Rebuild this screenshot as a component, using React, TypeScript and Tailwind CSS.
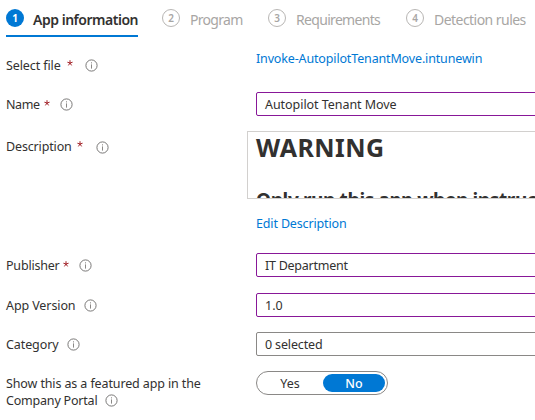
import type { ReactNode } from "react";

function InfoIcon({ className = "" }: { className?: string }) {
  return (
    <svg viewBox="0 0 13 13" className={`h-[13px] w-[13px] shrink-0 ${className}`} fill="none">
      <circle cx="6.5" cy="6.5" r="5.6" stroke="#6b6a69" strokeWidth="0.9" />
      <rect x="6" y="5.4" width="1" height="4.2" fill="#8a8886" />
      <rect x="6" y="3.3" width="1" height="1.1" fill="#8a8886" />
    </svg>
  );
}

function Star({ raised = false }: { raised?: boolean }) {
  return (
    <svg viewBox="0 0 6 6" className={`h-[6px] w-[6px] shrink-0 ${raised ? "mb-[6px]" : "mb-[3px]"}`} stroke="#a4262c" strokeWidth="1">
      <path d="M3 0.2V3M3 3L0.4 2.2M3 3L5.6 2.2M3 3L1.4 5.4M3 3L4.6 5.4" />
    </svg>
  );
}

function Tab({ n, label, className, text }: { n: number; label: string; className: string; text: string }) {
  return (
    <div className={`flex h-[37px] shrink-0 items-start pt-[9px] ${className}`}>
      <span className="flex h-[18px] w-[18px] shrink-0 items-center justify-center rounded-full border border-[#b8b6b4] text-[10px] leading-none font-semibold text-[#a8a6a4]">
        {n}
      </span>
      <span className={`ml-[10px] text-[14px] leading-[22px] whitespace-nowrap text-[#a8a6a4] ${text}`}>{label}</span>
    </div>
  );
}

function Row({ className, label, children }: { className: string; label: ReactNode; children: ReactNode }) {
  return (
    <div className={`flex items-start ${className}`}>
      <div className="flex h-[24px] w-[250px] shrink-0 items-center pt-px">{label}</div>
      {children}
    </div>
  );
}

function Field({ children, className }: { children: ReactNode; className: string }) {
  return (
    <div className={`flex h-[24px] w-[300px] shrink-0 items-center rounded-[2px] border pt-px pl-[8px] ${className}`}>
      {children}
    </div>
  );
}

export default function App() {
  return (
    <div className="h-[420px] w-[535px] overflow-hidden bg-white pl-[6px] font-['Noto_Sans','Open_Sans',sans-serif] text-[12.5px] leading-[18px] whitespace-nowrap text-[#323130]">
      <div className="flex h-[53px]">
        <div className="flex h-[37px] w-[132px] shrink-0 items-start border-b-2 border-[#0078d4] pt-[9px]">
          <span className="flex h-[18px] w-[18px] shrink-0 items-center justify-center rounded-full bg-[#0078d4] text-[10px] leading-none font-bold text-white">1</span>
          <span className="ml-[9px] text-[14px] leading-[22px] font-semibold tracking-[-0.48px]">App information</span>
        </div>
        <Tab n={2} label="Program" className="ml-[24px] w-[82px]" text="tracking-[-0.7px]" />
        <Tab n={3} label="Requirements" className="ml-[24px] w-[114px]" text="tracking-[-0.68px]" />
        <Tab n={4} label="Detection rules" className="ml-[24px] w-[122px]" text="tracking-[-0.54px]" />
      </div>

      <Row className="h-[39px]" label={<><span className="mr-[6px] tracking-[-0.1px]">Select file</span><Star raised /><InfoIcon className="ml-[12px]" /></>}>
        <span className="-mt-[3px] tracking-[-0.15px] text-[#0078d4]">Invoke-AutopilotTenantMove.intunewin</span>
      </Row>
      <Row className="h-[39px]" label={<><span className="mr-[4px] tracking-[-0.4px]">Name</span><Star /><InfoIcon className="ml-[10px]" /></>}>
        <Field className="border-[#881798]"><span className="tracking-[-0.05px]">Autopilot Tenant Move</span></Field>
      </Row>
      <div className="flex h-[83px]">
        <div className="flex h-[32px] w-[241px] shrink-0 items-center">
          <span className="mr-[5px] tracking-[-0.15px]">Description</span><Star raised /><InfoIcon className="ml-[13px]" />
        </div>
        <div className="h-[68px] w-[310px] shrink-0 overflow-hidden border border-[#d2d0ce] pl-[8px]">
          <h1 className="text-[25px] leading-[30px] font-bold tracking-[0.45px]">WARNING</h1>
          <h2 className="mt-[25px] text-[19px] leading-[26px] font-bold tracking-[-0.38px]">Only run this app when instructed</h2>
        </div>
      </div>
      <div className="h-[39px] pt-px pl-[250px] tracking-[-0.15px] text-[#0078d4]">Edit Description</div>
      <Row className="h-[40px]" label={<><span className="mr-[3px] tracking-[-0.2px]">Publisher</span><Star /><InfoIcon className="ml-[10px]" /></>}>
        <Field className="border-[#881798]"><span className="tracking-[-0.25px]">IT Department</span></Field>
      </Row>
      <Row className="h-[39px]" label={<><span className="tracking-[-0.1px]">App Version</span><InfoIcon className="ml-[9px]" /></>}>
        <Field className="border-[#881798]">1.0</Field>
      </Row>
      <Row className="h-[39px]" label={<><span className="tracking-[-0.1px]">Category</span><InfoIcon className="ml-[9px]" /></>}>
        <Field className="border-[#8a8886]"><span className="tracking-[-0.15px]">0 selected</span></Field>
      </Row>
      <div className="flex items-start">
        <div className="w-[250px] shrink-0 pt-[4px] leading-[17px]">
          <div className="tracking-[-0.12px]">Show this as a featured app in the</div>
          <div className="flex items-center"><span className="tracking-[-0.2px]">Company Portal</span><InfoIcon className="ml-[8px]" /></div>
        </div>
        <div className="flex h-[24px] w-[132px] items-center rounded-full border border-[#8a8886] pr-[2px]">
          <span className="w-[66px] pt-px text-center">Yes</span>
          <span className="h-[18px] w-[62px] rounded-full bg-[#0078d4] text-center leading-[19px] font-medium text-white">No</span>
        </div>
      </div>
    </div>
  );
}
